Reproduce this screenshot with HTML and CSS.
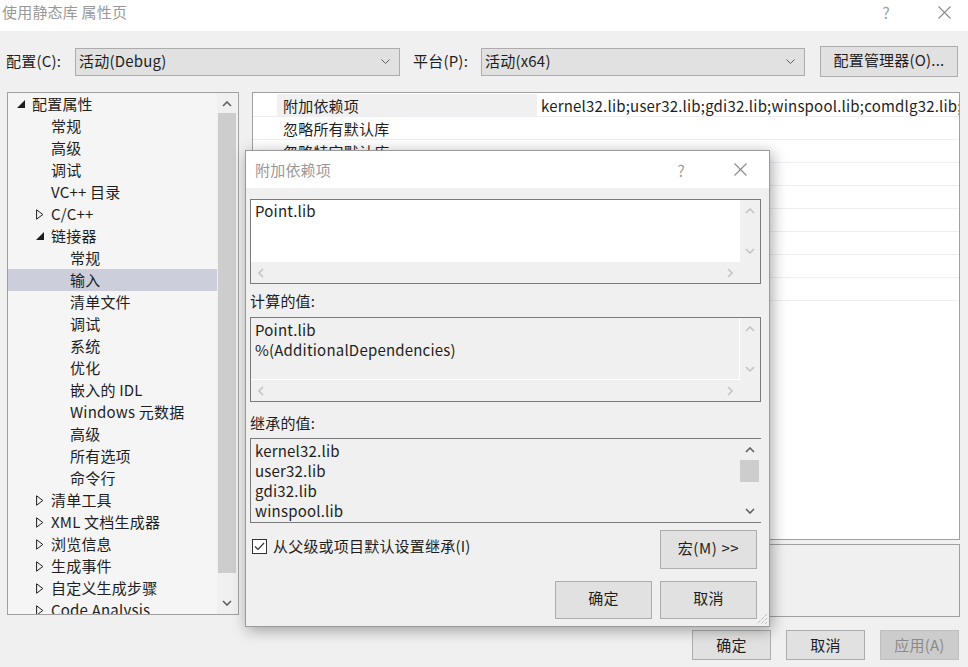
FILE: index.html
```html
<html><head><title>使用静态库 属性页</title>
<link rel="stylesheet" href="styles.css">
</head>
<body>
<div class="window">
  <div class="titlebar">
    <span class="title">使用静态库 属性页</span>
    <span class="tb-help">?</span>
    <span class="tb-close"><svg width="13" height="13" viewBox="0 0 13 13"><path d="M0.5 0.5L12.5 12.5M12.5 0.5L0.5 12.5" stroke="#8a8a8a" stroke-width="1.1"/></svg></span>
  </div>

  <div class="toolbar">
    <span class="tool-label">配置(C):</span>
    <div class="combo combo-config">
      <span>活动(Debug)</span>
      <svg class="combo-arrow" width="9" height="5" viewBox="0 0 9 5"><polyline points="0.5,0.5 4.5,4.5 8.5,0.5" fill="none" stroke="#606060"/></svg>
    </div>
    <span class="tool-label platform-label">平台(P):</span>
    <div class="combo combo-platform">
      <span>活动(x64)</span>
      <svg class="combo-arrow" width="9" height="5" viewBox="0 0 9 5"><polyline points="0.5,0.5 4.5,4.5 8.5,0.5" fill="none" stroke="#606060"/></svg>
    </div>
    <button class="btn btn-manager">配置管理器(O)...</button>
  </div>

  <div class="main">
    <div class="tree">
      <div class="tree-items">
        <div class="tree-row lvl0"><span class="twisty"><svg width="8" height="8" viewBox="0 0 8 8"><polygon points="8,0 8,8 0,8" fill="#1e1e1e"/></svg></span>配置属性</div>
        <div class="tree-row lvl1"><span class="twisty"></span>常规</div>
        <div class="tree-row lvl1"><span class="twisty"></span>高级</div>
        <div class="tree-row lvl1"><span class="twisty"></span>调试</div>
        <div class="tree-row lvl1"><span class="twisty"></span>VC++ 目录</div>
        <div class="tree-row lvl1"><span class="twisty"><svg width="8" height="11" viewBox="0 0 8 11"><polygon points="0.6,0.8 6.8,5.5 0.6,10.2" fill="none" stroke="#1e1e1e"/></svg></span>C/C++</div>
        <div class="tree-row lvl1"><span class="twisty"><svg width="8" height="8" viewBox="0 0 8 8"><polygon points="8,0 8,8 0,8" fill="#1e1e1e"/></svg></span>链接器</div>
        <div class="tree-row lvl2"><span class="twisty"></span>常规</div>
        <div class="tree-row lvl2 selected"><span class="twisty"></span>输入</div>
        <div class="tree-row lvl2"><span class="twisty"></span>清单文件</div>
        <div class="tree-row lvl2"><span class="twisty"></span>调试</div>
        <div class="tree-row lvl2"><span class="twisty"></span>系统</div>
        <div class="tree-row lvl2"><span class="twisty"></span>优化</div>
        <div class="tree-row lvl2"><span class="twisty"></span>嵌入的 IDL</div>
        <div class="tree-row lvl2"><span class="twisty"></span>Windows 元数据</div>
        <div class="tree-row lvl2"><span class="twisty"></span>高级</div>
        <div class="tree-row lvl2"><span class="twisty"></span>所有选项</div>
        <div class="tree-row lvl2"><span class="twisty"></span>命令行</div>
        <div class="tree-row lvl1"><span class="twisty"><svg width="8" height="11" viewBox="0 0 8 11"><polygon points="0.6,0.8 6.8,5.5 0.6,10.2" fill="none" stroke="#1e1e1e"/></svg></span>清单工具</div>
        <div class="tree-row lvl1"><span class="twisty"><svg width="8" height="11" viewBox="0 0 8 11"><polygon points="0.6,0.8 6.8,5.5 0.6,10.2" fill="none" stroke="#1e1e1e"/></svg></span>XML 文档生成器</div>
        <div class="tree-row lvl1"><span class="twisty"><svg width="8" height="11" viewBox="0 0 8 11"><polygon points="0.6,0.8 6.8,5.5 0.6,10.2" fill="none" stroke="#1e1e1e"/></svg></span>浏览信息</div>
        <div class="tree-row lvl1"><span class="twisty"><svg width="8" height="11" viewBox="0 0 8 11"><polygon points="0.6,0.8 6.8,5.5 0.6,10.2" fill="none" stroke="#1e1e1e"/></svg></span>生成事件</div>
        <div class="tree-row lvl1"><span class="twisty"><svg width="8" height="11" viewBox="0 0 8 11"><polygon points="0.6,0.8 6.8,5.5 0.6,10.2" fill="none" stroke="#1e1e1e"/></svg></span>自定义生成步骤</div>
        <div class="tree-row lvl1"><span class="twisty"><svg width="8" height="11" viewBox="0 0 8 11"><polygon points="0.6,0.8 6.8,5.5 0.6,10.2" fill="none" stroke="#1e1e1e"/></svg></span>Code Analysis</div>
      </div>
      <div class="vscroll tree-scroll">
        <div class="sb-btn"><svg width="10" height="6" viewBox="0 0 10 6"><polyline points="1,5 5,1 9,5" fill="none" stroke="#606060" stroke-width="1.6"/></svg></div>
        <div class="sb-thumb tree-thumb"></div>
        <div class="sb-space"></div>
        <div class="sb-btn"><svg width="10" height="6" viewBox="0 0 10 6"><polyline points="1,1 5,5 9,1" fill="none" stroke="#606060" stroke-width="1.6"/></svg></div>
      </div>
    </div>

    <div class="right">
      <div class="grid">
        <div class="grid-row active"><span class="gutter"></span><span class="name">附加依赖项</span><span class="value">kernel32.lib;user32.lib;gdi32.lib;winspool.lib;comdlg32.lib;advapi32.lib;shell32.lib;ole32.lib;oleaut32.lib;uuid.lib;odbc32.lib;odbccp32.lib;%(AdditionalDependencies)</span></div>
        <div class="grid-row"><span class="gutter"></span><span class="name">忽略所有默认库</span><span class="value"></span></div>
        <div class="grid-row"><span class="gutter"></span><span class="name">忽略特定默认库</span><span class="value"></span></div>
        <div class="grid-row"><span class="gutter"></span><span class="name">模块定义文件</span><span class="value"></span></div>
        <div class="grid-row"><span class="gutter"></span><span class="name">将模块添加到程序集</span><span class="value"></span></div>
        <div class="grid-row"><span class="gutter"></span><span class="name">嵌入托管资源文件</span><span class="value"></span></div>
        <div class="grid-row"><span class="gutter"></span><span class="name">强制符号引用</span><span class="value"></span></div>
        <div class="grid-row"><span class="gutter"></span><span class="name">延迟加载的 DLL</span><span class="value"></span></div>
        <div class="grid-row"><span class="gutter"></span><span class="name">程序集链接资源</span><span class="value"></span></div>
      </div>
      <div class="desc"></div>
    </div>
  </div>

  <div class="footer">
    <button class="btn btn-footer">确定</button>
    <button class="btn btn-footer">取消</button>
    <button class="btn btn-footer disabled">应用(A)</button>
  </div>

  <!-- modal editor for the selected property -->
  <div class="dialog">
    <div class="dlg-title">
      <span class="dlg-caption">附加依赖项</span>
      <span class="dlg-help">?</span>
      <span class="dlg-close"><svg width="13" height="13" viewBox="0 0 13 13"><path d="M0.5 0.5L12.5 12.5M12.5 0.5L0.5 12.5" stroke="#8a8a8a" stroke-width="1.1"/></svg></span>
    </div>
    <div class="dlg-body">
      <div class="tbox tbox-edit">
        <div class="tbox-text">Point.lib</div>
        <div class="vscroll">
          <div class="sb-btn"><svg width="10" height="6" viewBox="0 0 10 6"><polyline points="1,5 5,1 9,5" fill="none" stroke="#c4c4c4" stroke-width="1.6"/></svg></div>
          <div class="sb-space"></div>
          <div class="sb-btn"><svg width="10" height="6" viewBox="0 0 10 6"><polyline points="1,1 5,5 9,1" fill="none" stroke="#c4c4c4" stroke-width="1.6"/></svg></div>
        </div>
        <div class="hscroll">
          <div class="sb-hbtn"><svg width="6" height="10" viewBox="0 0 6 10"><polyline points="5,1 1,5 5,9" fill="none" stroke="#c4c4c4" stroke-width="1.6"/></svg></div>
          <div class="sb-hbtn"><svg width="6" height="10" viewBox="0 0 6 10"><polyline points="1,1 5,5 1,9" fill="none" stroke="#c4c4c4" stroke-width="1.6"/></svg></div>
        </div>
        <div class="corner"></div>
      </div>

      <div class="dlg-label first">计算的值:</div>
      <div class="tbox tbox-ro">
        <div class="tbox-text">Point.lib<br>%(AdditionalDependencies)</div>
        <div class="vscroll">
          <div class="sb-btn"><svg width="10" height="6" viewBox="0 0 10 6"><polyline points="1,5 5,1 9,5" fill="none" stroke="#c4c4c4" stroke-width="1.6"/></svg></div>
          <div class="sb-space"></div>
          <div class="sb-btn"><svg width="10" height="6" viewBox="0 0 10 6"><polyline points="1,1 5,5 9,1" fill="none" stroke="#c4c4c4" stroke-width="1.6"/></svg></div>
        </div>
        <div class="hscroll">
          <div class="sb-hbtn"><svg width="6" height="10" viewBox="0 0 6 10"><polyline points="5,1 1,5 5,9" fill="none" stroke="#c4c4c4" stroke-width="1.6"/></svg></div>
          <div class="sb-hbtn"><svg width="6" height="10" viewBox="0 0 6 10"><polyline points="1,1 5,5 1,9" fill="none" stroke="#c4c4c4" stroke-width="1.6"/></svg></div>
        </div>
        <div class="corner"></div>
      </div>

      <div class="dlg-label second">继承的值:</div>
      <div class="tbox tbox-list">
        <div class="tbox-text">kernel32.lib<br>user32.lib<br>gdi32.lib<br>winspool.lib<br>comdlg32.lib</div>
        <div class="vscroll">
          <div class="sb-btn tall"><svg width="10" height="6" viewBox="0 0 10 6"><polyline points="1,5 5,1 9,5" fill="none" stroke="#606060" stroke-width="1.6"/></svg></div>
          <div class="sb-thumb list-thumb"></div>
          <div class="sb-space"></div>
          <div class="sb-btn tall"><svg width="10" height="6" viewBox="0 0 10 6"><polyline points="1,1 5,5 9,1" fill="none" stroke="#606060" stroke-width="1.6"/></svg></div>
        </div>
      </div>

      <div class="dlg-row macro-row">
        <label class="check">
          <span class="check-box"><svg width="13" height="13" viewBox="0 0 13 13"><polyline points="2,6.5 5,9.5 11,3" fill="none" stroke="#333" stroke-width="1.2"/></svg></span>
          从父级或项目默认设置继承(I)
        </label>
        <button class="btn btn-dlg macro">宏(M) &gt;&gt;</button>
      </div>
      <div class="dlg-row ok-row">
        <button class="btn btn-dlg">确定</button>
        <button class="btn btn-dlg">取消</button>
      </div>
    </div>
    <svg class="grip" width="12" height="12" viewBox="0 0 12 12"><path d="M11 1L1 11M11 5L5 11M11 9L9 11" stroke="#a0a0a0" stroke-dasharray="1 1"/></svg>
  </div>
</div>
</body></html>
```

FILE: styles.css
```css
body {
  margin: 0;
  padding: 0;
  background: #f0f0f0;
  font-family: "Noto Sans CJK SC", "Noto Sans", sans-serif;
  font-size: 15px;
  letter-spacing: 0.2px;
  color: #1e1e1e;
  overflow: hidden;
}
.window {
  position: relative;
  width: 968px;
  height: 667px;
  background: #f0f0f0;
}
.titlebar {
  height: 31px;
  background: #fff;
  display: flex;
  align-items: center;
  padding-left: 2px;
  line-height: 20px;
}
.title {
  color: #999;
  flex: 1;
  margin-top: -8px;
}
.tb-help {
  color: #a0a0a0;
  font-size: 16px;
  margin-right: 48px;
  margin-top: -8px;
}
.tb-close {
  margin-right: 17px;
  margin-top: -7px;
  display: flex;
}

/* config / platform bar */
.toolbar {
  height: 61px;
  display: flex;
  align-items: center;
  padding-left: 6px;
}
.tool-label {
  width: 69px;
  line-height: 20px;
  margin-top: -2px;
}
.platform-label {
  width: 68px;
  margin-left: 13px;
}
.combo {
  height: 28px;
  box-sizing: border-box;
  background: #e1e1e1;
  border: 1px solid #acacac;
  display: flex;
  align-items: center;
  padding: 0 9px 0 3px;
  line-height: 20px;
}
.combo span { flex: 1; margin-top: -2px; }
.combo-config { width: 325px; }
.combo-platform { width: 324px; }
.btn {
  font-family: inherit;
  font-size: 15px;
  letter-spacing: 0.2px;
  color: #1e1e1e;
  background: #e1e1e1;
  border: 1px solid #adadad;
  box-sizing: border-box;
  padding: 0;
  line-height: 20px;
}
.btn-manager {
  width: 138px;
  height: 31px;
  margin-left: 15px;
  padding-bottom: 3px;
}

/* tree + grid */
.main {
  display: flex;
  height: 525px;
  padding-left: 7px;
}
.tree {
  width: 232px;
  height: 523px;
  box-sizing: border-box;
  border: 1px solid #a0a0a0;
  background: #f5f5f5;
  display: flex;
}
.tree-items {
  flex: 1;
  overflow: hidden;
}
.tree-row {
  height: 22px;
  display: flex;
  align-items: center;
  white-space: nowrap;
  line-height: 20px;
}
.tree-row.selected { background: #cccedb; }
.lvl0 { padding-left: 5px; }
.lvl1 { padding-left: 24px; }
.lvl2 { padding-left: 43px; }
.twisty {
  width: 19px;
  padding-left: 4px;
  box-sizing: border-box;
  display: flex;
  align-items: center;
}
.vscroll {
  width: 20px;
  background: #f0f0f0;
  display: flex;
  flex-direction: column;
}
.tree-scroll { margin-right: 1px; }
.sb-btn {
  height: 22px;
  display: flex;
  align-items: center;
  justify-content: center;
}
.sb-thumb {
  background: #cdcdcd;
  margin: 0 1px;
}
.tree-thumb { height: 460px; margin-top: -2px; }
.sb-space { flex: 1; }

.right {
  margin-left: 13px;
  width: 708px;
  display: flex;
  flex-direction: column;
  gap: 4px;
}
.grid {
  height: 448px;
  box-sizing: border-box;
  border: 1px solid #a0a0a0;
  background: #fff;
  padding-top: 1px;
}
.grid-row {
  display: grid;
  grid-template-columns: 24px 260px 1fr;
  height: 23px;
  box-sizing: border-box;
  border-bottom: 1px solid #efeff3;
  line-height: 20px;
}
.grid-row .name {
  padding: 2px 0 0 6px;
  white-space: nowrap;
  overflow: hidden;
}
.grid-row .value {
  padding: 2px 0 0 4px;
  white-space: nowrap;
  overflow: hidden;
}
.grid-row.active .name { background: #f0f0f0; }
.desc {
  height: 73px;
  box-sizing: border-box;
  border: 1px solid #a0a0a0;
  background: #f0f0f0;
}
.footer {
  display: flex;
  justify-content: flex-end;
  gap: 15px;
  padding: 13px 9px 0 0;
}
.btn-footer {
  width: 79px;
  height: 30px;
}
.btn-footer.disabled {
  background: #cccccc;
  border-color: #bfbfbf;
  color: #8a8a8a;
}

/* dialog */
.dialog {
  position: absolute;
  left: 245px;
  top: 150px;
  width: 525px;
  height: 477px;
  box-sizing: border-box;
  border: 1px solid #9a9a9a;
  background: #f0f0f0;
  box-shadow: 2px 3px 14px rgba(0, 0, 0, 0.35);
}
.dlg-title {
  height: 37px;
  background: #fff;
  display: flex;
  align-items: center;
  padding-left: 9px;
  line-height: 20px;
}
.dlg-caption {
  flex: 1;
  color: #999;
}
.dlg-help {
  color: #a0a0a0;
  font-size: 16px;
  margin-right: 49px;
}
.dlg-close {
  display: flex;
  margin-right: 22px;
}
.dlg-body {
  padding: 11px 8px 0 4px;
}
.tbox {
  height: 85px;
  box-sizing: border-box;
  border: 1px solid #7a7a7a;
  display: grid;
  grid-template-columns: 1fr 20px;
  grid-template-rows: 1fr 21px;
}
.tbox-list { grid-template-rows: 1fr; }
.tbox-text {
  padding: 1px 0 0 4px;
  line-height: 20px;
  white-space: nowrap;
  overflow: hidden;
}
.tbox-edit .tbox-text { background: #fff; }
.tbox-ro .tbox-text {
  background: #f0f0f0;
  border-right: 1px solid #fff;
  border-bottom: 1px solid #fff;
  padding-top: 2px;
}
.tbox-list .tbox-text {
  background: #f0f0f0;
  padding-top: 2px;
}
.hscroll {
  background: #f0f0f0;
  display: flex;
  justify-content: space-between;
}
.sb-hbtn {
  width: 20px;
  display: flex;
  align-items: center;
  justify-content: center;
}
.corner { background: #f0f0f0; }
.tbox-list .vscroll { padding-right: 1px; }
.sb-btn.tall { height: 22px; }
.list-thumb { height: 22px; margin: -1px 1px 0 0; }

.dlg-label {
  line-height: 20px;
  box-sizing: border-box;
}
.dlg-label.first { height: 33px; padding-top: 7px; }
.dlg-label.second { height: 36px; padding-top: 11px; }

.dlg-row {
  display: flex;
  justify-content: flex-end;
  gap: 8px;
  padding-right: 4px;
}
.macro-row {
  margin-top: 7px;
  align-items: flex-start;
}
.check {
  flex: 1;
  display: flex;
  align-items: center;
  gap: 6px;
  padding: 6px 0 0 2px;
  line-height: 20px;
}
.check-box {
  width: 15px;
  height: 15px;
  box-sizing: border-box;
  border: 1px solid #333;
  background: #fff;
  display: flex;
}
.btn-dlg {
  width: 97px;
  height: 39px;
  padding-bottom: 4px;
}
.btn-dlg.macro { letter-spacing: 0.6px; }
.ok-row { margin-top: 12px; }
.ok-row .btn-dlg { height: 38px; }
.grip {
  position: absolute;
  right: 1px;
  bottom: 1px;
}
```
